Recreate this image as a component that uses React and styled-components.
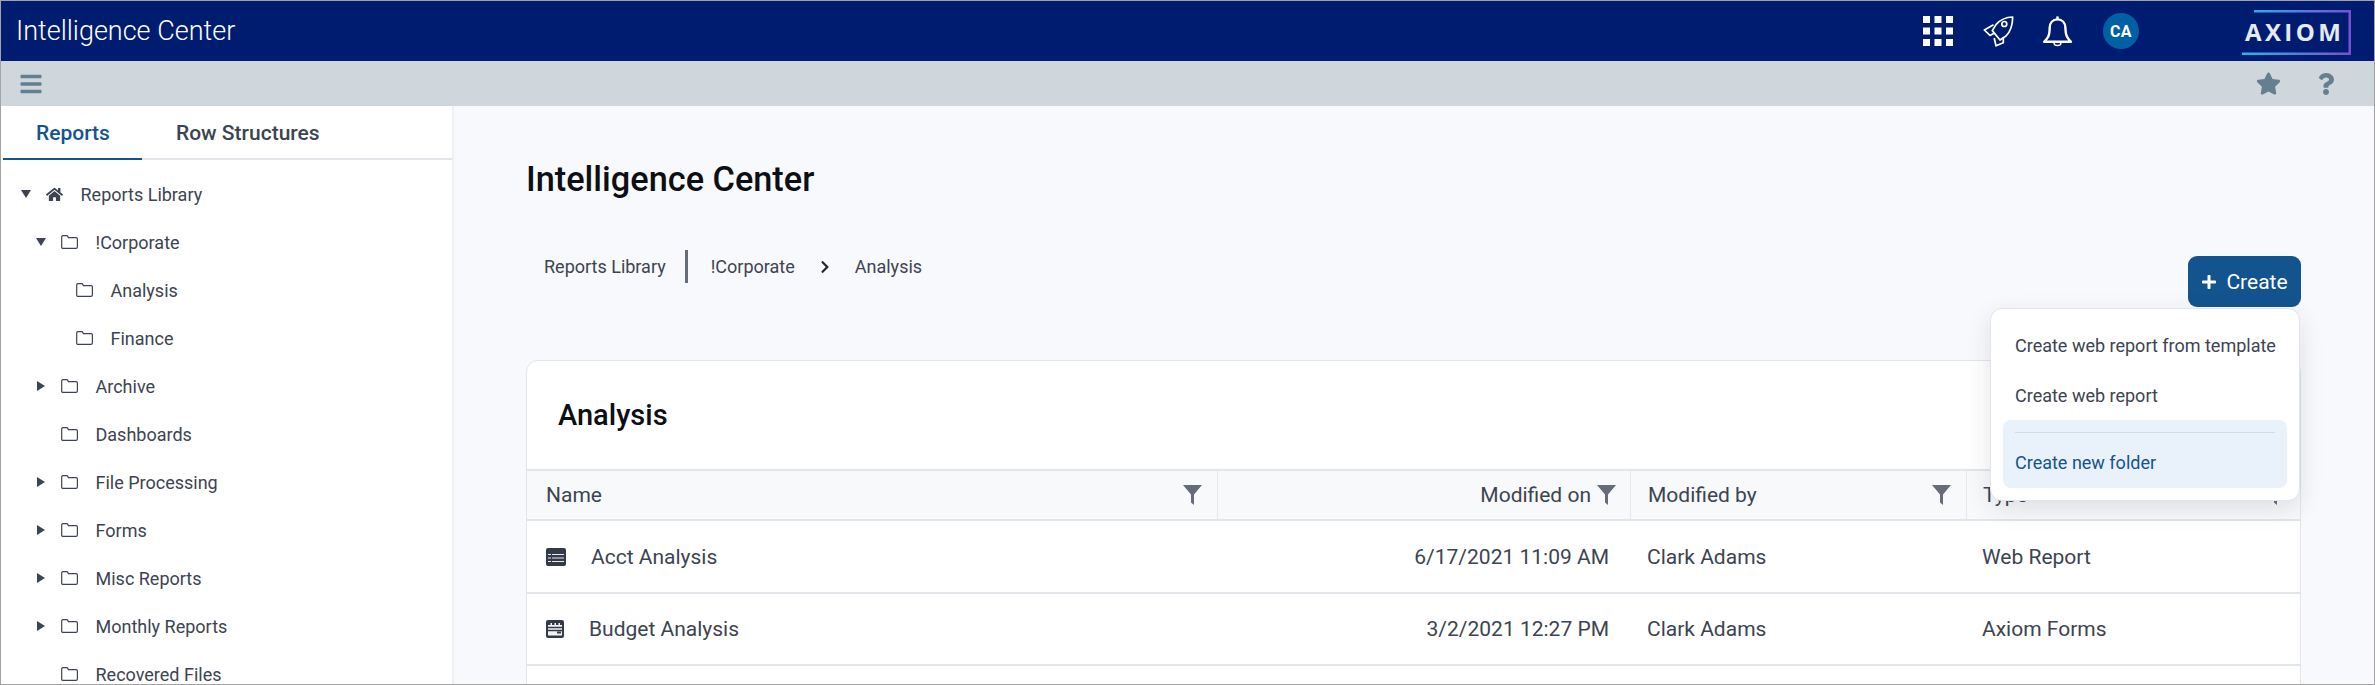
import React from 'react'
import styled, { createGlobalStyle } from 'styled-components'
import { FaBars, FaStar, FaQuestion, FaHome, FaPlus, FaChevronRight } from 'react-icons/fa'

const GlobalStyle = createGlobalStyle`
  html, body {
    margin: 0;
    padding: 0;
    background: #fff;
  }
  * {
    box-sizing: border-box;
  }
`

const Frame = styled.div`
  width: 2375px;
  height: 685px;
  display: flex;
  flex-direction: column;
  overflow: hidden;
  border: 1px solid #a3a3a3;
  font-family: Roboto, "Liberation Sans", sans-serif;
  color: #3d4451;
`

const TopBar = styled.header`
  height: 60px;
  flex: none;
  display: flex;
  align-items: center;
  background: #001c71;
  color: #fff;
  padding-left: 15px;
`

const AppName = styled.div`
  font-size: 27px;
  font-weight: 300;
  flex: 1;
`

const TopIcons = styled.div`
  display: flex;
  align-items: center;
  color: #fff;
  margin-right: 22px;
`

const TopIcon = styled.span`
  display: flex;
  width: ${p => p.$w}px;
  margin-right: ${p => p.$gap}px;
`

const Avatar = styled.span`
  width: 36px;
  height: 36px;
  border-radius: 50%;
  background: #0060a5;
  display: flex;
  align-items: center;
  justify-content: center;
  font-size: 16px;
  font-weight: 700;
  letter-spacing: 0.5px;
  margin-right: 103px;
`

const Logo = styled.div`
  position: relative;
  width: 110px;
  height: 45px;
  margin-top: 2px;
`

const LogoText = styled.span`
  position: absolute;
  left: 3px;
  top: 8px;
  font-family: "Open Sans", sans-serif;
  font-size: 24px;
  line-height: 28px;
  font-weight: 700;
  letter-spacing: 3.4px;
  color: #e6eaf3;
`

const ToolBar = styled.div`
  height: 45px;
  flex: none;
  display: flex;
  align-items: center;
  background: #cfd6dc;
  color: #648090;
  padding: 0 37px 0 18px;
`

const ToolSpacer = styled.div`
  flex: 1;
`

const ToolIcon = styled.span`
  display: flex;
  font-size: ${p => p.$size}px;
  margin-left: ${p => p.$left || 0}px;
`

const Body = styled.div`
  flex: 1;
  min-height: 0;
  display: flex;
`

const Sidebar = styled.aside`
  width: 453px;
  flex: none;
  background: #fff;
  border-right: 2px solid #eef0f4;
  padding-left: 2px;
`

const Tabs = styled.div`
  display: flex;
  height: 54px;
  border-bottom: 2px solid #e2e5ea;
`

const Tab = styled.div`
  height: 54px;
  display: flex;
  align-items: center;
  font-size: 21px;
  font-weight: 500;
  padding: 2px ${p => (p.$active ? 32 : 33)}px 0 33px;
  margin-right: ${p => (p.$active ? 1 : 0)}px;
  color: ${p => (p.$active ? '#13548f' : '#3d4451')};
  border-bottom: 2px solid ${p => (p.$active ? '#13548f' : 'transparent')};
`

const Tree = styled.div`
  padding-top: 10px;
`

const TreeRow = styled.div`
  height: 48px;
  display: flex;
  align-items: center;
  padding-left: ${p => 16 + p.$level * 15}px;
  font-size: 18px;
  color: #3d4451;
`

const Caret = styled.span`
  width: 27px;
  flex: none;
  display: flex;
  &::before {
    content: '';
    display: ${p => (p.$dir ? 'block' : 'none')};
    border-style: solid;
    ${p => p.$dir === 'down' && `
      margin-left: 2px;
      border-width: 8px 5px 0 5px;
      border-color: #3d4451 transparent transparent transparent;
    `}
    ${p => p.$dir === 'right' && `
      margin-left: 3px;
      border-width: 5px 0 5px 8px;
      border-color: transparent transparent transparent #3d4451;
    `}
  }
`

const TreeIcon = styled.span`
  width: 34.5px;
  flex: none;
  display: flex;
  font-size: 17px;
`

const Main = styled.main`
  flex: 1;
  min-width: 0;
  background: #f8f9fc;
  padding: 0 73px 0 72px;
  overflow: hidden;
`

const PageTitle = styled.h1`
  margin: 0;
  padding-top: 52px;
  font-size: 34.3px;
  line-height: 42px;
  font-weight: 500;
  color: #0c0f14;
`

const ActionRow = styled.div`
  display: flex;
  justify-content: space-between;
  align-items: flex-start;
  height: 110px;
  margin-top: 50px;
`

const Crumbs = styled.nav`
  display: flex;
  align-items: center;
  height: 33px;
  padding-left: 18px;
  font-size: 18px;
  color: #3d4451;
`

const CrumbBar = styled.span`
  width: 3px;
  height: 33px;
  background: #666c78;
  margin: 0 23px 0 19px;
`

const CrumbArrow = styled.span`
  display: flex;
  font-size: 14px;
  color: #23272f;
  margin: 0 23px;
`

const CreateWrap = styled.div`
  position: relative;
  margin-top: 6px;
`

const CreateButton = styled.button`
  width: 113px;
  height: 51px;
  border: none;
  border-radius: 9px;
  background: #13548f;
  color: #fff;
  display: flex;
  align-items: center;
  justify-content: center;
  gap: 9px;
  font: 400 21px Roboto, sans-serif;
`

const Menu = styled.div`
  position: absolute;
  top: 52px;
  right: 1px;
  width: 310px;
  height: 193px;
  background: #fff;
  border: 1px solid #e2e5ea;
  border-radius: 12px;
  padding: 11px 12px;
  box-shadow: 0 8px 24px rgba(30, 40, 60, 0.12);
  z-index: 2;
`

const MenuItem = styled.div`
  height: 50px;
  display: flex;
  align-items: center;
  padding-left: 12px;
  font-size: 18px;
  color: #3d4451;
`

const MenuActive = styled.div`
  height: 68px;
  padding: 12px 12px 0;
  border-radius: 8px;
  background: #e9f1fb;
  color: #13548f;
  font-size: 18px;
`

const MenuRule = styled.div`
  height: 1px;
  background: #d5dbe3;
  margin-bottom: 19px;
`

const Card = styled.section`
  background: #fff;
  border: 1px solid #e2e5ea;
  border-radius: 12px 12px 0 0;
  height: 400px;
`

const CardTitle = styled.h2`
  margin: 0;
  height: 108px;
  display: flex;
  align-items: center;
  padding-left: 31px;
  font-size: 29px;
  font-weight: 500;
  color: #0c0f14;
`

const Columns = styled.div`
  display: grid;
  grid-template-columns: 690px 413px 336px 1fr;
  height: ${p => p.$h}px;
  background: ${p => (p.$head ? '#f8f9fb' : '#fff')};
  border-top: ${p => (p.$head ? '2px solid #e2e5ea' : 'none')};
  border-bottom: 2px solid #e2e5ea;
`

const HeadCell = styled.div`
  display: flex;
  align-items: center;
  justify-content: ${p => (p.$right ? 'flex-end' : 'space-between')};
  gap: 6px;
  padding: 0 ${p => (p.$right ? 14 : 15)}px 0 ${p => p.$left || 16}px;
  font-size: 21px;
  color: #3d4451;
  border-left: ${p => (p.$first ? 'none' : '1px solid #e5e8ed')};
`

const Cell = styled.div`
  display: flex;
  align-items: center;
  justify-content: ${p => (p.$right ? 'flex-end' : 'flex-start')};
  padding: ${p => (p.$right ? '0 21px 0 0' : `0 0 0 ${p.$left || 16}px`)};
  font-size: 21px;
  color: #3d4451;
`

const NameCell = styled(Cell)`
  padding-left: 19px;
`

const RowIcon = styled.svg`
  flex: none;
  margin-right: ${p => p.$gap}px;
`

const AppsIcon = () => (
  <svg width="30" height="30" viewBox="0 0 30 30" fill="#fff">
    {[0, 11.5, 23].map(y =>
      [0, 11.5, 23].map(x => <rect key={`${x}-${y}`} x={x} y={y} width="7" height="7" />)
    )}
  </svg>
)

const RocketIcon = () => (
  <svg width="31" height="31" viewBox="0 0 31 31" fill="none" stroke="#fff" strokeWidth="1.7" strokeLinejoin="round">
    <path d="M29.7 1C23 1.2 17 3.8 13 8.6L9.3 14.6L17 24L23 20C27.5 15.6 29.6 8.5 29.7 1Z" />
    <circle cx="21.3" cy="8" r="2.5" />
    <path d="M10.5 8.8L1.3 14L7 19.4L11.5 17" />
    <path d="M20.3 21V26.7L13 29.8L11.2 22" />
  </svg>
)

const BellIcon = () => (
  <svg width="30" height="31" viewBox="0 0 30 31" fill="none" stroke="#fff" strokeWidth="2.4" strokeLinejoin="round">
    <path d="M14.5 3.4C9.7 3.4 6.8 7 6.7 11.7C6.6 15.5 6.6 18.4 5 21C4 22.8 2.7 24.2 1.2 25.8H28C26.4 24.2 25.1 22.8 24.2 21C22.6 18.4 22.6 15.5 22.4 11.7C22.2 7 19.3 3.4 14.5 3.4Z" />
    <path d="M14.5 0.4V3" />
    <path d="M11 27C11.3 30.4 17.7 30.4 18 27" strokeWidth="1.4" />
  </svg>
)

const FolderIcon = () => (
  <svg width="17" height="14" viewBox="0 0 17 14" fill="none" stroke="#3d4451" strokeWidth="1.2" strokeLinejoin="round">
    <path d="M0.7 2C0.7 1.1 1.2 0.6 2 0.6H5.8C6.6 0.6 7 1 7.3 2.6H15C15.9 2.6 16.4 3.1 16.4 4V12C16.4 12.9 15.9 13.4 15 13.4H2C1.2 13.4 0.7 12.9 0.7 12Z" />
  </svg>
)

const FunnelIcon = () => (
  <svg width="19" height="20" viewBox="0 0 19 20" fill="#666c78">
    <path d="M0 0H19L11 9.5V20L8 17.5V9.5Z" />
  </svg>
)

const LogoFrame = () => (
  <svg width="109" height="45" viewBox="0 0 109 45" style={{ position: 'absolute', inset: 0 }} fill="none">
    <defs>
      <linearGradient id="axiomLine" x1="0" y1="0" x2="1" y2="0">
        <stop offset="0" stopColor="#2bb3ea" />
        <stop offset="1" stopColor="#7b4fd2" />
      </linearGradient>
    </defs>
    <path d="M12 0h97v45H0v-2.5h106.5V2.5H12z" fill="url(#axiomLine)" />
  </svg>
)

const AcctIcon = () => (
  <RowIcon $gap={25} width="20" height="18" viewBox="0 0 20 18">
    <rect width="20" height="18" rx="2" fill="#343a46" />
    <path d="M2 6.5h16M2 10h16M2 13.5h16" stroke="#e8eaee" strokeWidth="1.2" />
    <path d="M5.5 5.5v10" stroke="#343a46" strokeWidth="1" />
  </RowIcon>
)

const BudgetIcon = () => (
  <RowIcon $gap={25} width="18" height="18" viewBox="0 0 18 18">
    <rect width="18" height="18" rx="2" fill="#343a46" />
    <rect x="2" y="3" width="14" height="12.5" fill="#f2f3f5" />
    <path d="M2 4h14" stroke="#343a46" strokeWidth="2" strokeDasharray="2.5 1.5" />
    <path d="M2 7.5h14M2 10.5h14" stroke="#343a46" strokeWidth="1.4" />
    <rect x="11" y="11.5" width="4" height="2" fill="#343a46" />
  </RowIcon>
)

const tree = [
  { label: 'Reports Library', level: 0, caret: 'down', home: true },
  { label: '!Corporate', level: 1, caret: 'down' },
  { label: 'Analysis', level: 2 },
  { label: 'Finance', level: 2 },
  { label: 'Archive', level: 1, caret: 'right' },
  { label: 'Dashboards', level: 1 },
  { label: 'File Processing', level: 1, caret: 'right' },
  { label: 'Forms', level: 1, caret: 'right' },
  { label: 'Misc Reports', level: 1, caret: 'right' },
  { label: 'Monthly Reports', level: 1, caret: 'right' },
  { label: 'Recovered Files', level: 1 },
]

const rows = [
  { name: 'Acct Analysis', icon: <AcctIcon />, date: '6/17/2021 11:09 AM', by: 'Clark Adams', type: 'Web Report', h: 73 },
  { name: 'Budget Analysis', icon: <BudgetIcon />, date: '3/2/2021 12:27 PM', by: 'Clark Adams', type: 'Axiom Forms', h: 72 },
]

const App = () => {
  return (
    <Frame>
      <GlobalStyle />
      <TopBar>
        <AppName>Intelligence Center</AppName>
        <TopIcons>
          <TopIcon $w={30} $gap={30}><AppsIcon /></TopIcon>
          <TopIcon $w={31} $gap={29}><RocketIcon /></TopIcon>
          <TopIcon $w={30} $gap={30}><BellIcon /></TopIcon>
          <Avatar>CA</Avatar>
          <Logo>
            <LogoFrame />
            <LogoText>AXIOM</LogoText>
          </Logo>
        </TopIcons>
      </TopBar>
      <ToolBar>
        <ToolIcon $size={24}><FaBars /></ToolIcon>
        <ToolSpacer />
        <ToolIcon $size={25}><FaStar /></ToolIcon>
        <ToolIcon $size={22} $left={34}><FaQuestion /></ToolIcon>
      </ToolBar>
      <Body>
        <Sidebar>
          <Tabs>
            <Tab $active>Reports</Tab>
            <Tab>Row Structures</Tab>
          </Tabs>
          <Tree>
            {tree.map(item => (
              <TreeRow key={item.label} $level={item.level}>
                <Caret $dir={item.caret} />
                <TreeIcon>{item.home ? <FaHome /> : <FolderIcon />}</TreeIcon>
                {item.label}
              </TreeRow>
            ))}
          </Tree>
        </Sidebar>
        <Main>
          <PageTitle>Intelligence Center</PageTitle>
          <ActionRow>
            <Crumbs>
              Reports Library
              <CrumbBar />
              !Corporate
              <CrumbArrow><FaChevronRight /></CrumbArrow>
              Analysis
            </Crumbs>
            <CreateWrap>
              <CreateButton><FaPlus size={16} />Create</CreateButton>
              <Menu>
                <MenuItem>Create web report from template</MenuItem>
                <MenuItem>Create web report</MenuItem>
                <MenuActive>
                  <MenuRule />
                  Create new folder
                </MenuActive>
              </Menu>
            </CreateWrap>
          </ActionRow>
          <Card>
            <CardTitle>Analysis</CardTitle>
            <Columns $head $h={52}>
              <HeadCell $first $left={19}>Name<FunnelIcon /></HeadCell>
              <HeadCell $right>Modified on<FunnelIcon /></HeadCell>
              <HeadCell $left={17}>Modified by<FunnelIcon /></HeadCell>
              <HeadCell>Type<FunnelIcon /></HeadCell>
            </Columns>
            {rows.map(row => (
              <Columns key={row.name} $h={row.h}>
                <NameCell>{row.icon}{row.name}</NameCell>
                <Cell $right>{row.date}</Cell>
                <Cell $left={17}>{row.by}</Cell>
                <Cell>{row.type}</Cell>
              </Columns>
            ))}
          </Card>
        </Main>
      </Body>
    </Frame>
  )
}

export default App
